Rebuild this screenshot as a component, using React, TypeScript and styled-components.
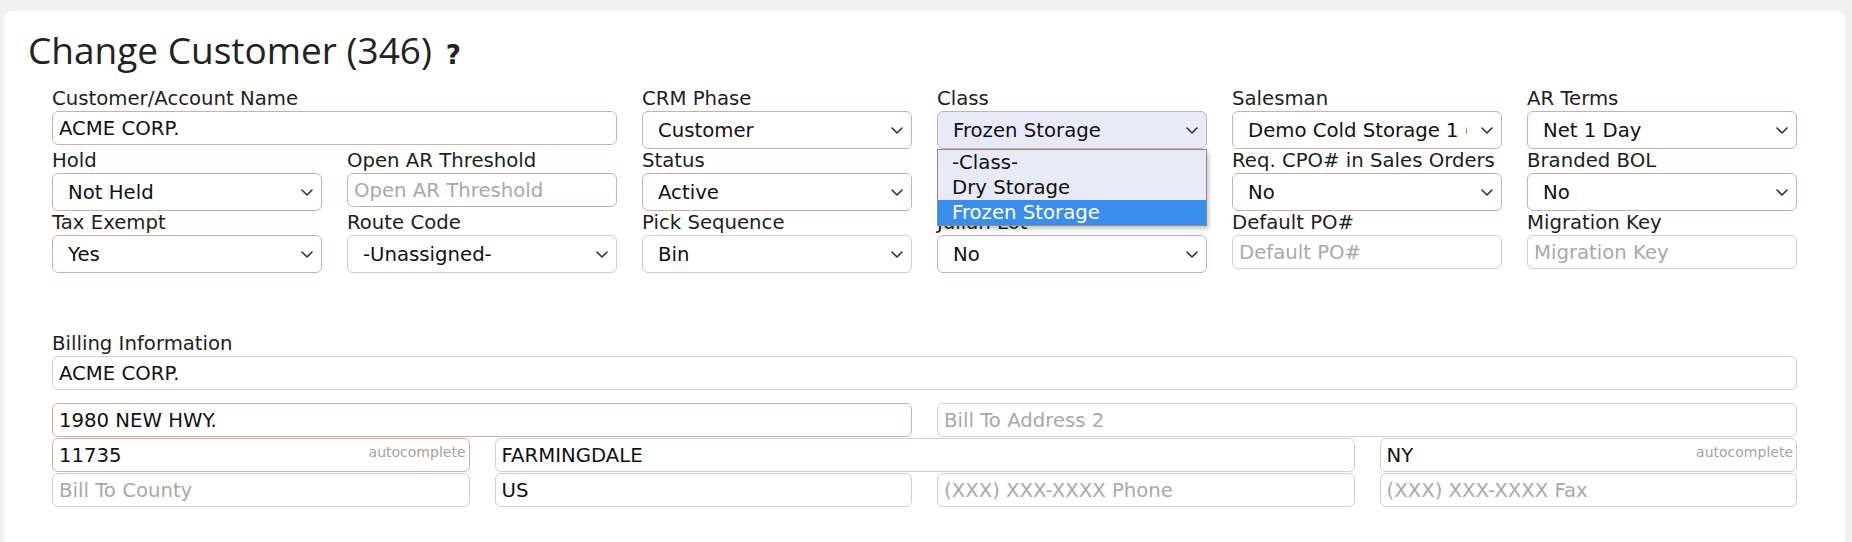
import React from "react"
import styled, { createGlobalStyle } from "styled-components"

const ROSE = "#d9aaa4"
const GRAY = "#cfcfcf"

const GlobalStyle = createGlobalStyle`
  html, body {
    margin: 0;
    background: #f1f1f1;
  }
  body {
    padding: 11px 7px 0 4px;
    font-family: "DejaVu Sans", Verdana, sans-serif;
    color: #1e1e1e;
  }
`

const Card = styled.div`
  background: #fff;
  border-radius: 8px 8px 0 0;
  min-height: calc(100vh - 11px);
  box-sizing: border-box;
  padding: 16px 24px 0;
`

const Title = styled.h1`
  margin: 0 0 14px;
  height: 46px;
  line-height: 46px;
  font-family: "Open Sans", "Noto Sans", sans-serif;
  font-size: 37px;
  font-weight: 400;
  color: #222;
  white-space: nowrap;
`

const HelpMark = styled.span`
  font-family: "DejaVu Sans", sans-serif;
  font-weight: 700;
  font-size: 26px;
  margin-left: 14px;
`

const Form = styled.div`
  padding: 0 24px;
`

const FieldGrid = styled.div`
  display: grid;
  grid-template-columns: repeat(6, 1fr);
  column-gap: 25px;
  align-items: start;
`

const Field = styled.div<{ $span?: number }>`
  position: relative;
  display: flex;
  flex-direction: column;
  min-width: 0;
  grid-column: span ${(p) => p.$span ?? 1};
`

const Label = styled.div`
  height: 24px;
  line-height: 24px;
  font-size: 19.7px;
  white-space: nowrap;
`

const TextInput = styled.input<{ $req?: boolean }>`
  width: 100%;
  height: 34px;
  box-sizing: border-box;
  margin: 0;
  border: 1px solid ${(p) => (p.$req ? ROSE : GRAY)};
  border-radius: 6px;
  padding: 0 6px;
  background: #fff;
  font-family: "DejaVu Sans", Verdana, sans-serif;
  font-size: 19.7px;
  color: #111;
  outline: none;

  &::placeholder {
    color: #a9a9a9;
  }
`

const SelectBox = styled.div<{ $req?: boolean; $active?: boolean }>`
  display: flex;
  align-items: center;
  height: 38px;
  box-sizing: border-box;
  border: 1px solid ${(p) => (p.$req ? ROSE : GRAY)};
  border-radius: 6px;
  padding: 0 8px 0 15px;
  background: ${(p) => (p.$active ? "#e9eaf8" : "#fff")};
  font-size: 19.7px;
  color: #111;
`

const SelectValue = styled.span`
  flex: 1;
  min-width: 0;
  overflow: hidden;
  white-space: nowrap;
  margin-right: 14px;
`

const OptionList = styled.div`
  position: absolute;
  top: 62px;
  left: 0;
  right: 0;
  z-index: 5;
  border: 1px solid #8c8c8c;
  background: #e9eaf8;
  box-shadow: 2px 3px 4px rgba(0, 0, 0, 0.22);
`

const Option = styled.div<{ $selected?: boolean }>`
  height: 25px;
  line-height: 25px;
  padding-left: 14px;
  font-size: 19.7px;
  background: ${(p) => (p.$selected ? "#3a8eeb" : "transparent")};
  color: ${(p) => (p.$selected ? "#fff" : "#111")};
`

const Billing = styled.div`
  margin-top: 59px;
`

const BillName = styled.div`
  margin-bottom: 13px;
`

const BillGrid = styled.div`
  display: grid;
  grid-template-columns: repeat(4, 1fr);
  column-gap: 25px;
  row-gap: 1px;
`

const Cell = styled.div<{ $span?: number }>`
  position: relative;
  min-width: 0;
  grid-column: span ${(p) => p.$span ?? 1};
`

const Hint = styled.span`
  position: absolute;
  top: 6px;
  right: 4px;
  font-size: 14px;
  color: #a3a3a3;
  pointer-events: none;
`

const Chevron = () => (
  <svg width="12" height="7" viewBox="0 0 12 7" fill="none">
    <path d="M1 1l5 5 5-5" stroke="#333" strokeWidth="1.6" strokeLinecap="round" strokeLinejoin="round" />
  </svg>
)

type SelProps = { value: string; req?: boolean; active?: boolean }

const Select = ({ value, req, active }: SelProps) => (
  <SelectBox $req={req} $active={active}>
    <SelectValue>{value}</SelectValue>
    <Chevron />
  </SelectBox>
)

export default function App() {
  return (
    <>
      <GlobalStyle />
      <Card>
        <Title>
          Change Customer (346)<HelpMark>?</HelpMark>
        </Title>
        <Form>
          <FieldGrid>
            <Field $span={2}>
              <Label>Customer/Account Name</Label>
              <TextInput $req defaultValue="ACME CORP." />
            </Field>
            <Field>
              <Label>CRM Phase</Label>
              <Select req value="Customer" />
            </Field>
            <Field>
              <Label>Class</Label>
              <Select req active value="Frozen Storage" />
              <OptionList>
                <Option>-Class-</Option>
                <Option>Dry Storage</Option>
                <Option $selected>Frozen Storage</Option>
              </OptionList>
            </Field>
            <Field>
              <Label>Salesman</Label>
              <Select req value="Demo Cold Storage 1 (Admin)" />
            </Field>
            <Field>
              <Label>AR Terms</Label>
              <Select req value="Net 1 Day" />
            </Field>

            <Field>
              <Label>Hold</Label>
              <Select req value="Not Held" />
            </Field>
            <Field>
              <Label>Open AR Threshold</Label>
              <TextInput $req placeholder="Open AR Threshold" />
            </Field>
            <Field>
              <Label>Status</Label>
              <Select req value="Active" />
            </Field>
            <Field />
            <Field>
              <Label>Req. CPO# in Sales Orders</Label>
              <Select req value="No" />
            </Field>
            <Field>
              <Label>Branded BOL</Label>
              <Select req value="No" />
            </Field>

            <Field>
              <Label>Tax Exempt</Label>
              <Select req value="Yes" />
            </Field>
            <Field>
              <Label>Route Code</Label>
              <Select value="-Unassigned-" />
            </Field>
            <Field>
              <Label>Pick Sequence</Label>
              <Select value="Bin" />
            </Field>
            <Field>
              <Label>Julian Lot</Label>
              <Select req value="No" />
            </Field>
            <Field>
              <Label>Default PO#</Label>
              <TextInput placeholder="Default PO#" />
            </Field>
            <Field>
              <Label>Migration Key</Label>
              <TextInput placeholder="Migration Key" />
            </Field>
          </FieldGrid>

          <Billing>
            <BillName>
              <Label>Billing Information</Label>
              <TextInput defaultValue="ACME CORP." />
            </BillName>
            <BillGrid>
              <Cell $span={2}>
                <TextInput $req defaultValue="1980 NEW HWY." />
              </Cell>
              <Cell $span={2}>
                <TextInput placeholder="Bill To Address 2" />
              </Cell>
              <Cell>
                <TextInput $req defaultValue="11735" />
                <Hint>autocomplete</Hint>
              </Cell>
              <Cell $span={2}>
                <TextInput defaultValue="FARMINGDALE" />
              </Cell>
              <Cell>
                <TextInput defaultValue="NY" />
                <Hint>autocomplete</Hint>
              </Cell>
              <Cell>
                <TextInput placeholder="Bill To County" />
              </Cell>
              <Cell>
                <TextInput defaultValue="US" />
              </Cell>
              <Cell>
                <TextInput placeholder="(XXX) XXX-XXXX Phone" />
              </Cell>
              <Cell>
                <TextInput placeholder="(XXX) XXX-XXXX Fax" />
              </Cell>
            </BillGrid>
          </Billing>
        </Form>
      </Card>
    </>
  )
}
